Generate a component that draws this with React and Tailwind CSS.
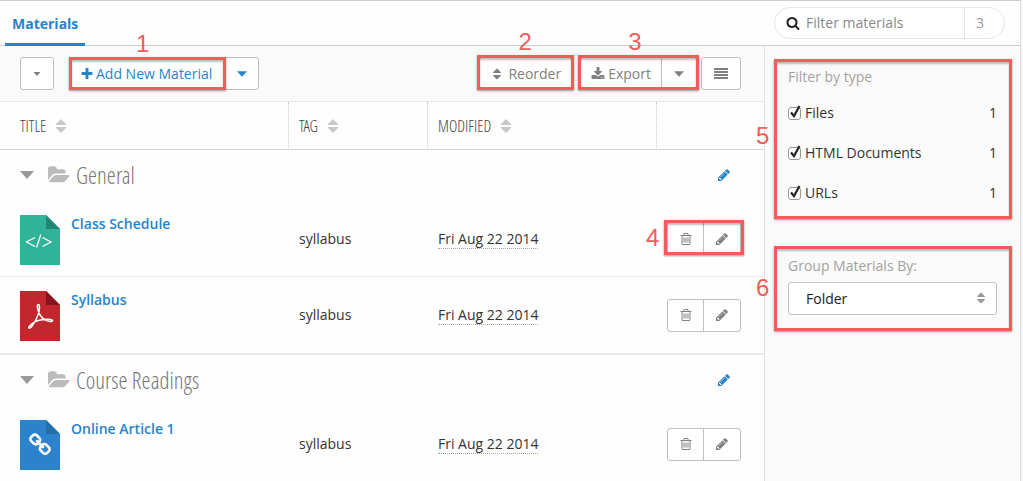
import React, { useState } from 'react';

const ICONS = {
  sort: 'M1408 1088q0 26-19 45l-448 448q-19 19-45 19t-45-19l-448-448q-19-19-19-45t19-45 45-19h896q26 0 45 19t19 45zm0-384q0 26-19 45t-45 19h-896q-26 0-45-19t-19-45 19-45l448-448q19-19 45-19t45 19l448 448q19 19 19 45z',
  plus: 'M1600 736v192q0 40-28 68t-68 28h-416v416q0 40-28 68t-68 28h-192q-40 0-68-28t-28-68v-416h-416q-40 0-68-28t-28-68v-192q0-40 28-68t68-28h416v-416q0-40 28-68t68-28h192q40 0 68 28t28 68v416h416q40 0 68 28t28 68z',
  pencil: 'M491 1536l91-91-235-235-91 91v107h128v128h107zm523-928q0-22-22-22-10 0-17 7l-542 542q-7 7-7 17 0 22 22 22 10 0 17-7l542-542q7-7 7-17zm-54-192l416 416-832 832h-416v-416zm683 96q0 53-37 90l-166 166-416-416 166-165q36-38 90-38 53 0 91 38l235 234q37 39 37 91z',
  trash: 'M704 736v576q0 14-9 23t-23 9h-64q-14 0-23-9t-9-23v-576q0-14 9-23t23-9h64q14 0 23 9t9 23zm256 0v576q0 14-9 23t-23 9h-64q-14 0-23-9t-9-23v-576q0-14 9-23t23-9h64q14 0 23 9t9 23zm256 0v576q0 14-9 23t-23 9h-64q-14 0-23-9t-9-23v-576q0-14 9-23t23-9h64q14 0 23 9t9 23zm128 724v-948h-896v948q0 22 7 40.5t14.5 27 10.5 8.5h832q3 0 10.5-8.5t14.5-27 7-40.5zm-672-1076h448l-48-117q-7-9-17-11h-317q-10 2-17 11zm928 32v64q0 14-9 23t-23 9h-96v948q0 83-47 143.5t-113 60.5h-832q-66 0-113-58.5t-47-141.5v-952h-96q-14 0-23-9t-9-23v-64q0-14 9-23t23-9h309l70-167q15-37 54-63t79-26h320q40 0 79 26t54 63l70 167h309q14 0 23 9t9 23z',
  search: 'M1216 832q0-185-131.5-316.5t-316.5-131.5-316.5 131.5-131.5 316.5 131.5 316.5 316.5 131.5 316.5-131.5 131.5-316.5zm512 832q0 52-38 90t-90 38q-54 0-90-38l-343-342q-179 124-399 124-143 0-273.5-55.5t-225-150-150-225-55.5-273.5 55.5-273.5 150-225 225-150 273.5-55.5 273.5 55.5 225 150 150 225 55.5 273.5q0 220-124 399l343 343q37 37 37 90z',
  link: 'M1520 1216q0-40-28-68l-208-208q-28-28-68-28-42 0-72 32 3 3 19 18.5t21.5 21.5 15 19 13 25.5 3.5 27.5q0 40-28 68t-68 28q-15 0-27.5-3.5t-25.5-13-19-15-21.5-21.5-18.5-19q-33 31-33 73 0 40 28 68l206 207q27 27 68 27 40 0 68-26l147-146q28-28 28-67zm-703-705q0-40-28-68l-206-207q-28-28-68-28-39 0-68 27l-147 146q-28 28-28 67 0 40 28 68l208 208q27 27 68 27 42 0 72-31-3-3-19-18.5t-21.5-21.5-15-19-13-25.5-3.5-27.5q0-40 28-68t68-28q15 0 27.5 3.5t25.5 13 19 15 21.5 21.5 18.5 19q33-31 33-73zm895 705q0 120-85 203l-147 146q-83 83-203 83-121 0-204-85l-206-207q-83-83-83-203 0-123 88-209l-88-88q-86 88-208 88-120 0-204-84l-208-208q-84-84-84-204t85-203l147-146q83-83 203-83 121 0 204 85l206 207q83 83 83 203 0 123-88 209l88 88q86-88 208-88 120 0 204 84l208 208q84 84 84 204z',
  download: 'M1344 1344q0-26-19-45t-45-19-45 19-19 45 19 45 45 19 45-19 19-45zm256 0q0-26-19-45t-45-19-45 19-19 45 19 45 45 19 45-19 19-45zm128-224v320q0 40-28 68t-68 28h-1472q-40 0-68-28t-28-68v-320q0-40 28-68t68-28h465l135 136q58 56 136 56t136-56l136-136h464q40 0 68 28t28 68zm-325-569q17 41-14 70l-448 448q-18 19-45 19t-45-19l-448-448q-31-29-14-70 17-39 59-39h256v-448q0-26 19-45t45-19h256q26 0 45 19t19 45v448h256q42 0 59 39z',
  folderOpen: 'M1879 952q0 31-31 66l-336 396q-43 51-120.5 86.5t-143.5 35.5h-1088q-34 0-60.5-13t-26.5-43q0-31 31-66l336-396q43-51 120.5-86.5t143.5-35.5h1088q34 0 60.5 13t26.5 43zm-343-344v160h-832q-94 0-197 47.5t-164 119.5l-337 396-5 6q0-4-.5-12.5t-.5-12.5v-960q0-92 66-158t158-66h320q92 0 158 66t66 158v32h544q92 0 158 66t66 158z',
};

const GROUPS = [
  {
    name: 'General',
    items: [
      { title: 'Class Schedule', type: 'html', tag: 'syllabus', modified: 'Fri Aug 22 2014', marked: true },
      { title: 'Syllabus', type: 'pdf', tag: 'syllabus', modified: 'Fri Aug 22 2014' },
    ],
  },
  {
    name: 'Course Readings',
    items: [{ title: 'Online Article 1', type: 'url', tag: 'syllabus', modified: 'Fri Aug 22 2014' }],
  },
];

const TYPES = [
  { id: 'files', label: 'Files', count: 1 },
  { id: 'html', label: 'HTML Documents', count: 1 },
  { id: 'urls', label: 'URLs', count: 1 },
];

const FILE_COLORS = {
  html: ['#31b399', '#238672'],
  pdf: ['#c1272d', '#861420'],
  url: ['#2c83cb', '#246fa5'],
};

function Icon({ name, className = 'size-[14px]', box = '0 0 1792 1792' }) {
  return (
    <svg viewBox={box} fill="currentColor" aria-hidden="true" className={`shrink-0 ${className}`}>
      <path d={ICONS[name]} />
    </svg>
  );
}

function Caret({ className }) {
  return (
    <svg viewBox="0 0 14 8" fill="currentColor" aria-hidden="true" className={`shrink-0 ${className}`}>
      <path d="M0 0h14L7 8z" />
    </svg>
  );
}

function ColumnSort() {
  return (
    <svg viewBox="0 0 10 14" fill="#c8c8c8" aria-hidden="true" className="h-[14px] w-[10px] shrink-0">
      <path d="M5 0l5 5v1H0V5zM0 8h10v1l-5 5-5-5z" />
    </svg>
  );
}

function FileIcon({ type }) {
  const [base, fold] = FILE_COLORS[type];
  return (
    <svg viewBox="0 0 40 50" aria-hidden="true" className="h-[50px] w-10 shrink-0">
      <path d="M0 0h26l14 14v36H0z" fill={base} />
      <path d="M26 0l14 14H26z" fill={fold} />
      {type === 'html' && (
        <path d="M15 22.500l-8.500 4.500 8.500 4.500M20.800 19.500l-4.200 13M22.500 22.500l8.500 4.500-8.500 4.500" fill="none" stroke="#fff" strokeWidth="1.300" />
      )}
      {type === 'pdf' && (
        <path
          d="M18.500 13.500c-1.500 0-1.300 2.500-.5 5.500 1.200 4.500 4.500 10.500 12 11.500 3 .3 3.500-1.500.5-2-5-.8-13 .2-17.500 3.500-2.500 1.800-5 4.300-4.200 5 1.200 1 4-2.500 6.200-6.500 2.300-4.200 4.300-8.500 4.500-13.500 0-2-.2-3.500-1-3.500z"
          fill="none"
          stroke="#fff"
          strokeWidth="1.500"
        />
      )}
      {type === 'url' && (
        <svg x="8" y="13" width="24" height="24" viewBox="0 0 1792 1792">
          <path d={ICONS.link} fill="#fff" />
        </svg>
      )}
    </svg>
  );
}

// Red frame and number laid over a control; the parent has to be relative
function Callout({ number, box, label }) {
  return (
    <>
      <span className={`pointer-events-none absolute z-10 border-3 border-[#f25c5a] shadow-[0_1px_2px_rgba(0,0,0,0.4),inset_0_2px_2px_rgba(0,0,0,0.25)] ${box}`} />
      <span className={`pointer-events-none absolute z-10 font-['Liberation_Sans',Arial,sans-serif] text-2xl leading-6 text-[#f25c5a] ${label}`}>
        {number}
      </span>
    </>
  );
}

function Button({ className = '', children, ...props }) {
  return (
    <button
      type="button"
      className={`flex h-[33px] items-center justify-center border border-[#bfbfbf] bg-white ${className}`}
      {...props}
    >
      {children}
    </button>
  );
}

function Toolbar() {
  return (
    <div className="flex items-center gap-4 border-b border-[#e8e8e8] bg-[#fafafa] py-[11px] pr-[23px] pl-5 text-[#808080]">
      <Button className="w-[34px] rounded-[3px]" aria-label="Select materials">
        <Caret className="h-1 w-2" />
      </Button>
      <div className="relative flex text-[#2784cb]">
        <Button className="gap-[2px] rounded-l-[3px] pr-3 pl-[9px]">
          <Icon name="plus" />
          Add New Material
        </Button>
        <Button className="-ml-px w-[35px] rounded-r-[3px]" aria-label="More ways to add">
          <Caret className="h-[6px] w-[10px]" />
        </Button>
        <Callout number="1" box="inset-y-0 -left-px right-[33px]" label="left-[66px] -top-[25px]" />
      </div>
      <div className="ml-auto flex gap-1">
        <div className="relative mr-1">
          <Button className="gap-1 rounded-[3px] px-[10px]">
            <Icon name="sort" />
            Reorder
          </Button>
          <Callout number="2" box="-inset-x-[2px] -top-[2px] bottom-0" label="left-[39px] -top-[27px]" />
        </div>
        <div className="relative flex">
          <Button className="gap-[3px] rounded-l-[3px] px-[10px]">
            <Icon name="download" />
            Export
          </Button>
          <Button className="-ml-px w-9 rounded-r-[3px]" aria-label="Export options">
            <Caret className="h-[6px] w-[10px]" />
          </Button>
          <Callout number="3" box="-inset-x-[2px] -top-[2px] bottom-0" label="left-12 -top-[27px]" />
        </div>
        <Button className="w-10 rounded-[3px]" aria-label="List view">
          <svg viewBox="0 0 14 11" fill="currentColor" aria-hidden="true" className="h-[11px] w-[14px]">
            <path d="M0 0h14v2H0zM0 3h14v2H0zM0 6h14v2H0zM0 9h14v2H0z" />
          </svg>
        </Button>
      </div>
    </div>
  );
}

function MaterialRow({ item, last }) {
  const cell = last ? 'h-[78px] border-b-2 border-[#e9e9e9]' : 'h-[76px] border-b border-[#e9e9e9]';
  return (
    <tr>
      <td className={`pl-5 align-top ${cell}`}>
        <div className="flex gap-[11px] pt-[14px]">
          <FileIcon type={item.type} />
          <a href="#" className="self-start leading-[18px] font-semibold text-[#2784cb]">{item.title}</a>
        </div>
      </td>
      <td className={`pl-[11px] ${cell}`}>{item.tag}</td>
      <td className={`pl-[11px] ${cell}`}>
        <span className="border-b border-dotted border-[#aaa]">{item.modified}</span>
      </td>
      <td className={`pl-[11px] ${cell}`}>
        <div className="relative flex w-[74px] text-[#808080]">
          <Button className="w-[37px] rounded-l-[3px]" aria-label={`Delete ${item.title}`}>
            <Icon name="trash" />
          </Button>
          <Button className="-ml-px w-[38px] rounded-r-[3px]" aria-label={`Edit ${item.title}`}>
            <Icon name="pencil" />
          </Button>
          {item.marked && <Callout number="4" box="-inset-x-[3px] -top-[2px] bottom-0" label="-left-[21px] top-1" />}
        </div>
      </td>
    </tr>
  );
}

function MaterialsTable() {
  const narrow = "font-['Open_Sans_Condensed_Light','Open_Sans_Condensed','Liberation_Sans_Narrow','Open_Sans',sans-serif] font-light";
  const head = 'h-12 border-b border-[#d5d5d5] text-left text-base text-[#444]';
  return (
    <table className="w-full table-fixed border-separate border-spacing-0">
      <colgroup>
        <col />
        <col className="w-[139px]" />
        <col className="w-[229px]" />
        <col className="w-[108px]" />
      </colgroup>
      <thead>
        <tr>
          <th className={`pl-5 ${head} ${narrow}`}>
            <span className="flex items-center gap-[10px]">TITLE <ColumnSort /></span>
          </th>
          {['TAG', 'MODIFIED'].map((name) => (
            <th key={name} className={`border-l border-l-[#ccc] pl-[10px] [border-left-style:dotted] ${head} ${narrow}`}>
              <span className="flex items-center gap-[10px]">{name} <ColumnSort /></span>
            </th>
          ))}
          <th className={`border-l border-l-[#ccc] [border-left-style:dotted] ${head}`} aria-label="Actions" />
        </tr>
      </thead>
      {GROUPS.map((group) => (
        <tbody key={group.name}>
          <tr>
            <th colSpan={3} className={`h-[51px] pb-[2px] pl-5 text-left text-[23px] leading-8 text-[#777] ${narrow}`}>
              <span className="flex items-center">
                <button type="button" aria-label={`Collapse ${group.name}`} className="mr-[14px] text-[#999]">
                  <Caret className="h-2 w-[14px]" />
                </button>
                <Icon name="folderOpen" box="0 0 1920 1792" className="mr-[6px] h-[22px] w-[22px] text-[#bbb]" />
                {group.name}
              </span>
            </th>
            <td className="pb-[2px] pl-[61px]">
              <button type="button" aria-label={`Edit ${group.name}`} className="block text-[#2784cb]">
                <Icon name="pencil" />
              </button>
            </td>
          </tr>
          {group.items.map((item, i) => (
            <MaterialRow key={item.title} item={item} last={i === group.items.length - 1} />
          ))}
        </tbody>
      ))}
    </table>
  );
}

function Sidebar() {
  const [checked, setChecked] = useState({ files: true, html: true, urls: true });

  return (
    <aside className="flex w-[256px] shrink-0 flex-col gap-[27px] border-l border-[#e3e3e3] bg-[#fafafa] pt-[13px] pr-2 pl-[9px]">
      <div role="group" aria-labelledby="filter-type" className="relative pt-[2px] pr-[15px] pb-[6px] pl-[14px]">
        <h2 id="filter-type" className="leading-8 text-[#a3a3a3]">Filter by type</h2>
        {TYPES.map((type) => (
          <div key={type.id} className="flex h-10 items-center">
            <label className="flex items-center gap-1">
              <span className="relative flex">
                <input
                  type="checkbox"
                  checked={checked[type.id]}
                  onChange={() => setChecked({ ...checked, [type.id]: !checked[type.id] })}
                  className="peer size-[13px] appearance-none rounded-[3px] border border-[#999] bg-white"
                />
                <svg viewBox="0 0 14 14" fill="none" stroke="#222" strokeWidth="2.200" aria-hidden="true" className="pointer-events-none absolute -top-[2px] left-0 hidden size-[14px] peer-checked:block">
                  <path d="M3 7.500l3 3.500 5.500-10" />
                </svg>
              </span>
              {type.label}
            </label>
            <span className="ml-auto">{type.count}</span>
          </div>
        ))}
        <Callout number="5" box="inset-0" label="-left-[18px] top-[65px]" />
      </div>
      <div className="relative pt-1 pr-[15px] pb-4 pl-[14px]">
        <label htmlFor="group-by" className="block leading-8 text-[#a3a3a3]">Group Materials By:</label>
        <div className="relative">
          <select id="group-by" className="block h-[33px] w-full appearance-none rounded-[3px] border border-[#c4c4c4] bg-white pl-[17px] text-[#222]">
            <option>Folder</option>
            <option>Tag</option>
          </select>
          <Icon name="sort" className="pointer-events-none absolute top-[9px] right-[9px] size-[14px] text-[#999]" />
        </div>
        <Callout number="6" box="inset-0" label="-left-[18px] top-[30px]" />
      </div>
    </aside>
  );
}

export default function App() {
  return (
    <div className="min-h-screen bg-[#f8f8f8] pr-[2px] font-['Open_Sans',sans-serif] text-sm text-[#333]">
      <div className="flex min-h-screen flex-col border-t border-r border-t-[#ccc] border-r-[#ddd] bg-[#fefefe]">
        <header className="flex h-[45px] items-center justify-between border-b border-[#ccc] pr-[15px] pl-[5px]">
          <a href="#" className="-mb-px flex h-[45px] items-center border-b-3 border-[#2784cb] px-[7px] pt-1 font-bold text-[#2784cb]">
            Materials
          </a>
          <div className="flex h-8 w-[231px] items-center rounded-full border border-[#e6e6e6] bg-white">
            <label htmlFor="filter" className="pl-[11px] text-[#222]" aria-label="Filter materials">
              <Icon name="search" />
            </label>
            <input
              id="filter"
              type="text"
              placeholder="Filter materials"
              className="ml-[6px] min-w-0 flex-1 placeholder:text-[#888] focus:outline-none"
            />
            <span className="flex h-full w-10 items-center border-l border-[#e6e6e6] pl-[11px] text-[#999]">3</span>
          </div>
        </header>
        <div className="flex flex-1">
          <main className="min-w-0 flex-1">
            <Toolbar />
            <MaterialsTable />
          </main>
          <Sidebar />
        </div>
      </div>
    </div>
  );
}
